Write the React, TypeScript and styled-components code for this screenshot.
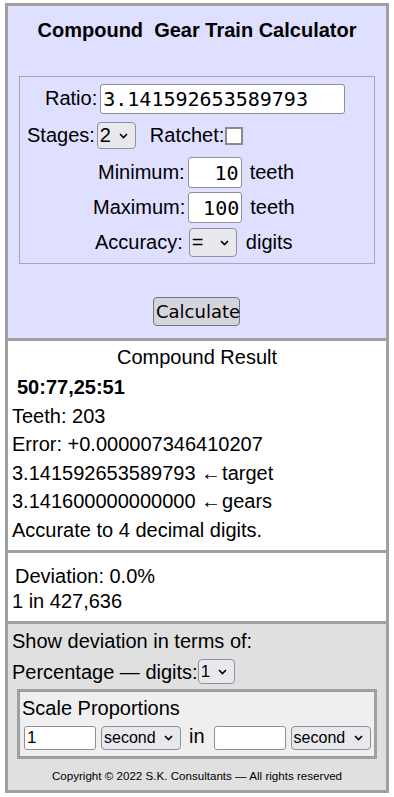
import React from "react";
import styled, { createGlobalStyle } from "styled-components";

const Global = createGlobalStyle`
  html, body { margin: 0; padding: 0; background: #fff; }
  body { font-family: "Liberation Sans", Arial, sans-serif; color: #000; }
`;

const Page = styled.div`
  margin: 3px 5px 0 5px;
  width: 384px;
  box-sizing: border-box;
  border: 3px solid #a0a0a0;
  display: flex;
  flex-direction: column;
`;

const Section = styled.section<{ $bg: string; $last?: boolean }>`
  background: ${(p) => p.$bg};
  border-bottom: ${(p) => (p.$last ? "none" : "3px solid #a0a0a0")};
  display: flex;
  flex-direction: column;
`;

const Title = styled.h1`
  margin: 0;
  padding: 13px 0 0 0;
  font-size: 20px;
  font-weight: bold;
  text-align: center;
  line-height: 22px;
  white-space: pre;
`;

const Fieldset = styled.div`
  margin: 35px 11px 0 11px;
  border: 1px solid #a8a8a8;
  padding: 6px 0 5px;
  display: flex;
  flex-direction: column;
  align-items: flex-start;
  gap: 4px;
`;

const Row = styled.div<{ $pad?: number; $h?: number }>`
  display: flex;
  align-items: center;
  font-size: 20px;
  height: ${(p) => p.$h ?? 31}px;
  padding-left: ${(p) => p.$pad ?? 0}px;
`;

const Label = styled.span<{ $before?: number; $after?: number }>`
  margin-left: ${(p) => p.$before ?? 0}px;
  margin-right: ${(p) => p.$after ?? 0}px;
  white-space: pre;
`;

const TextInput = styled.input<{ $w: number; $align?: string; $h?: number; $fs?: number; $sans?: boolean }>`
  width: ${(p) => p.$w}px;
  height: ${(p) => p.$h ?? 31}px;
  box-sizing: border-box;
  border: 1px solid #8f8f8f;
  border-radius: 3px;
  background: #fff;
  font-family: ${(p) => (p.$sans ? '"Liberation Sans", Arial, sans-serif' : '"DejaVu Sans Mono", monospace')};
  font-size: ${(p) => p.$fs ?? 20}px;
  text-align: ${(p) => p.$align ?? "left"};
  padding: 0 2px;
  color: #000;
  outline: none;
  margin: 0;
`;

const SelectBox = styled.div<{ $w: number; $h?: number; $fs?: number }>`
  width: ${(p) => p.$w}px;
  height: ${(p) => p.$h ?? 28}px;
  box-sizing: border-box;
  border: 1px solid #8f8f9d;
  border-radius: 4px;
  background: #e9e9ed;
  display: flex;
  align-items: center;
  justify-content: space-between;
  padding: 0 7px 0 2px;
  font-family: "Liberation Sans", Arial, sans-serif;
  font-size: ${(p) => p.$fs ?? 20}px;
  color: #000;
`;

const Chevron = () => (
  <svg width="9" height="6" viewBox="0 0 9 6">
    <path d="M1 1 L4.5 4.5 L8 1" fill="none" stroke="#000" strokeWidth="1.6" />
  </svg>
);

const Select: React.FC<{ w: number; h?: number; fs?: number; value: string }> = ({ w, h, fs, value }) => (
  <SelectBox $w={w} $h={h} $fs={fs}>
    <span>{value}</span>
    <Chevron />
  </SelectBox>
);

const Checkbox = styled.span`
  display: inline-block;
  width: 18px;
  height: 18px;
  box-sizing: border-box;
  border: 2px solid #8a8a8a;
  background: #fff;
  margin-left: 1px;
`;

const ButtonArea = styled.div`
  display: flex;
  justify-content: center;
  padding: 33px 0 12px;
`;

const Button = styled.button`
  font-family: "DejaVu Sans", sans-serif;
  font-size: 18px;
  background: #d4d4dc;
  border: 1px solid #767676;
  border-radius: 4px;
  padding: 0 2px;
  width: 87px;
  height: 29px;
  color: #000;
  margin-left: -1px;
`;

const ResultHead = styled.div`
  text-align: center;
  font-size: 20px;
  padding-top: 4px;
  height: 25px;
  line-height: 24px;
`;

const Lines = styled.div<{ $lh: number; $pt?: number; $pb?: number }>`
  padding: ${(p) => p.$pt ?? 0}px 4px ${(p) => p.$pb ?? 0}px 4px;
  font-size: 20px;
  line-height: ${(p) => p.$lh}px;
`;

const Bold = styled.div`
  font-weight: bold;
  padding-left: 5px;
`;

const Indent = styled.div`
  padding-left: 3px;
`;

const Arrow = styled.span`
  margin-right: 1px;
`;

const Fieldset2 = styled.div`
  margin: 2px 9px 0 9px;
  border: 3px solid #a0a0a0;
  background: #efefef;
  padding: 3px 2px 5px 2px;
  display: flex;
  flex-direction: column;
`;

const ScaleTitle = styled.div`
  font-size: 20px;
  line-height: 26px;
`;

const ScaleRow = styled.div`
  display: flex;
  align-items: center;
  padding-left: 2px;
  margin-top: 4px;
`;

const InWord = styled.span`
  font-size: 20px;
  margin: 0 9px 3px 8px;
`;

const Copyright = styled.div`
  text-align: center;
  font-size: 11.6px;
  line-height: 13px;
  padding: 10px 0 8px;
`;

export default function App() {
  return (
    <>
      <Global />
      <Page>
        <Section $bg="#dfdfff">
          <Title>{"Compound\u00a0 Gear Train Calculator"}</Title>
          <Fieldset>
            <Row $pad={25}>
              <Label $after={3}>Ratio:</Label>
              <TextInput $w={245} $h={30} defaultValue="3.141592653589793" />
            </Row>
            <Row $pad={7} $h={35}>
              <Label $after={2}>Stages:</Label>
              <Select w={39} h={27} value="2" />
              <Label $before={14}>Ratchet:</Label>
              <Checkbox />
            </Row>
            <Row $pad={78}>
              <Label $after={3}>Minimum:</Label>
              <TextInput $w={54} $align="right" defaultValue="10" />
              <Label $before={8}>teeth</Label>
            </Row>
            <Row $pad={73}>
              <Label $after={3}>Maximum:</Label>
              <TextInput $w={54} $align="right" defaultValue="100" />
              <Label $before={8}>teeth</Label>
            </Row>
            <Row $pad={75}>
              <Label $after={6}>Accuracy:</Label>
              <Select w={48} h={29} value="=" />
              <Label $before={9}>digits</Label>
            </Row>
          </Fieldset>
          <ButtonArea>
            <Button>Calculate</Button>
          </ButtonArea>
        </Section>
        <Section $bg="#ffffff">
          <ResultHead>Compound Result</ResultHead>
          <Lines $lh={28.5} $pt={3} $pb={6}>
            <Bold>50:77,25:51</Bold>
            <div>Teeth: 203</div>
            <div>Error: +0.000007346410207</div>
            <div>
              3.141592653589793 <Arrow>←</Arrow>target
            </div>
            <div>
              3.141600000000000 <Arrow>←</Arrow>gears
            </div>
            <div>Accurate to 4 decimal digits.</div>
          </Lines>
        </Section>
        <Section $bg="#ffffff">
          <Lines $lh={25} $pt={11} $pb={7}>
            <Indent>Deviation: 0.0%</Indent>
            <div>1 in 427,636</div>
          </Lines>
        </Section>
        <Section $bg="#e0e0e0" $last>
          <Lines $lh={30} $pt={2}>
            <div>Show deviation in terms of:</div>
            <Row>
              <span>Percentage — digits:</span>
              <Select w={37} h={25} fs={17} value="1" />
            </Row>
          </Lines>
          <Fieldset2>
            <ScaleTitle>Scale Proportions</ScaleTitle>
            <ScaleRow>
              <TextInput $w={72} $h={24} $fs={17} $sans defaultValue="1" />
              <Label $before={5}>
                <Select w={80} h={24} fs={16} value="second" />
              </Label>
              <InWord>in</InWord>
              <TextInput $w={72} $h={24} $fs={17} $sans defaultValue="" />
              <Label $before={5}>
                <Select w={80} h={24} fs={16} value="second" />
              </Label>
            </ScaleRow>
          </Fieldset2>
          <Copyright>Copyright © 2022 S.K. Consultants — All rights reserved</Copyright>
        </Section>
      </Page>
    </>
  );
}
